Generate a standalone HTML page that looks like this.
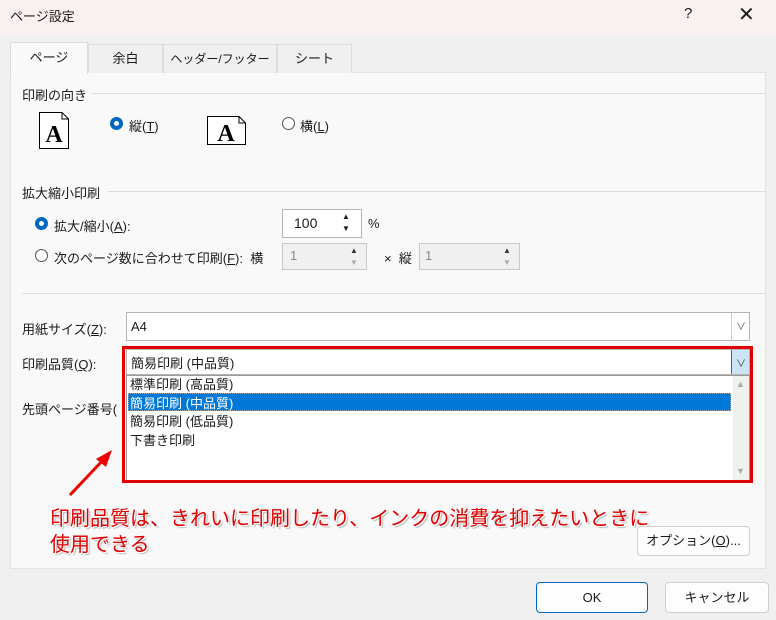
<!DOCTYPE html>
<html><head><meta charset="utf-8"><style>
*{margin:0;padding:0;box-sizing:border-box}
body{width:776px;height:620px;background:#f0f0f0;font-family:"Liberation Sans","Noto Sans CJK JP",sans-serif;font-size:13px;color:#1a1a1a;position:relative;overflow:hidden}
.a{position:absolute;white-space:nowrap}
.tab{position:absolute;top:44px;height:29px;background:#f0f0f0;border:1px solid #dcdcdc;border-bottom:none;text-align:center;line-height:28px;font-size:13px}
.line{position:absolute;height:1px;background:#dcdcdc}
.rad{position:absolute;width:13px;height:13px;border-radius:50%;border:1px solid #555;background:#fff}
.rad.on{border:4px solid #0067c0}
.box{position:absolute;background:#fff;border:1px solid #b5b5b5}
.btn{position:absolute;background:#fdfdfd;border:1px solid #cfcfcf;border-radius:4px;text-align:center;font-size:13px}
</style></head><body>
<div class="a" style="left:0;top:0;width:776px;height:34px;background:#f8f1f0"></div>
<div class="a" style="left:10px;top:6px;font-size:13px">ページ設定</div>
<div class="a" style="left:684px;top:5px;font-size:15px">?</div>
<div class="a" style="left:738px;top:2px;font-size:20px;font-weight:300">✕</div>

<div class="a" style="left:10px;top:72px;width:756px;height:497px;background:#f9f9f9;border:1px solid #e3e3e3"></div>
<div class="tab" style="left:88px;width:75px">余白</div>
<div class="tab" style="left:163px;width:114px;font-size:12px">ヘッダー/フッター</div>
<div class="tab" style="left:277px;width:75px">シート</div>
<div class="tab" style="left:10px;top:42px;height:32px;width:78px;background:#f9f9f9;line-height:30px">ページ</div>

<div class="line" style="left:92px;top:93px;width:674px"></div>
<div class="a" style="left:22px;top:85px">印刷の向き</div>
<svg class="a" style="left:39px;top:112px" width="32" height="38"><path d="M0.5 0.5H23L29.5 7V36.5H0.5Z" fill="#fff" stroke="#000"/><path d="M23 0.5V7H29.5" fill="none" stroke="#000"/><text x="15" y="30" font-family="Liberation Serif" font-size="24" text-anchor="middle" font-weight="bold">A</text></svg>
<div class="rad on" style="left:110px;top:117px"></div>
<div class="a" style="left:129px;top:116px">縦(<u>T</u>)</div>
<svg class="a" style="left:207px;top:116px" width="40" height="30"><path d="M0.5 0.5H32L38.5 7V28.5H0.5Z" fill="#fff" stroke="#000"/><path d="M32 0.5V7H38.5" fill="none" stroke="#000"/><text x="19" y="25" font-family="Liberation Serif" font-size="24" text-anchor="middle" font-weight="bold">A</text></svg>
<div class="rad" style="left:282px;top:117px"></div>
<div class="a" style="left:300px;top:116px">横(<u>L</u>)</div>

<div class="line" style="left:108px;top:191px;width:658px"></div>
<div class="a" style="left:22px;top:183px">拡大縮小印刷</div>
<div class="rad on" style="left:35px;top:217px"></div>
<div class="a" style="left:54px;top:216px">拡大/縮小(<u>A</u>):</div>
<div class="box" style="left:282px;top:209px;width:80px;height:29px"></div>
<div class="a" style="left:294px;top:215px;font-size:14px">100</div>
<div class="a" style="left:342px;top:211px;font-size:8px;line-height:12px">▲<br>▼</div>
<div class="a" style="left:368px;top:216px">%</div>
<div class="rad" style="left:35px;top:249px"></div>
<div class="a" style="left:54px;top:248px">次のページ数に合わせて印刷(<u>F</u>):&nbsp; 横</div>
<div class="box" style="left:282px;top:243px;width:85px;height:27px;background:#f0f0f0;border-color:#c8c8c8"></div>
<div class="a" style="left:290px;top:248px;color:#888">1</div>
<div class="a" style="left:350px;top:245px;font-size:8px;line-height:12px;color:#333">▲<br><span style="color:#aaa">▼</span></div>
<div class="a" style="left:384px;top:248px">×&nbsp; 縦</div>
<div class="box" style="left:419px;top:243px;width:101px;height:27px;background:#f0f0f0;border-color:#c8c8c8"></div>
<div class="a" style="left:425px;top:248px;color:#888">1</div>
<div class="a" style="left:503px;top:245px;font-size:8px;line-height:12px;color:#333">▲<br><span style="color:#aaa">▼</span></div>

<div class="line" style="left:22px;top:293px;width:744px"></div>
<div class="a" style="left:22px;top:319px">用紙サイズ(<u>Z</u>):</div>
<div class="box" style="left:126px;top:312px;width:624px;height:29px"></div>
<div class="a" style="left:131px;top:319px">A4</div>
<div class="a" style="left:731px;top:313px;width:1px;height:27px;background:#ccc"></div>
<div class="a" style="left:736px;top:318px;font-size:10px;color:#555">∨</div>

<div class="a" style="left:22px;top:354px">印刷品質(<u>Q</u>):</div>
<div class="a" style="left:22px;top:399px">先頭ページ番号(</div>
<div class="box" style="left:126px;top:349px;width:624px;height:26px"></div>
<div class="a" style="left:131px;top:353px">簡易印刷 (中品質)</div>
<div class="a" style="left:731px;top:350px;width:18px;height:24px;background:#cce4f7;border-left:1px solid #0078d7"></div>
<div class="a" style="left:736px;top:355px;font-size:10px;color:#333">∨</div>
<div class="box" style="left:126px;top:375px;width:624px;height:106px;border-color:#999"></div>
<div class="a" style="left:733px;top:376px;width:16px;height:104px;background:#f0f0f0"></div>
<div class="a" style="left:736px;top:379px;font-size:9px;color:#aaa">▲</div>
<div class="a" style="left:736px;top:466px;font-size:9px;color:#aaa">▼</div>
<div class="a" style="left:128px;top:393px;width:603px;height:18px;background:#0078d7;border:1px dotted #aaa"></div>
<div class="a" style="left:130px;top:376px;line-height:18.5px">標準印刷 (高品質)<br><span style="color:#fff">簡易印刷 (中品質)</span><br>簡易印刷 (低品質)<br>下書き印刷</div>
<div class="a" style="left:122px;top:346px;width:631px;height:137px;border:3px solid #e00000"></div>

<svg class="a" style="left:60px;top:445px" width="60" height="60"><line x1="10" y1="50" x2="44" y2="14" stroke="#e00" stroke-width="3"/><path d="M52 5L36 14L46 22Z" fill="#e00"/></svg>
<div class="a" style="left:50px;top:506px;font-size:20px;line-height:26px;color:#e00000;text-shadow:1px 1px 0 #fff,2px 2px 1px #bbb">印刷品質は、きれいに印刷したり、インクの消費を抑えたいときに<br>使用できる</div>

<div class="btn" style="left:637px;top:526px;width:113px;height:30px;line-height:28px">オプション(<u>O</u>)...</div>
<div class="btn" style="left:536px;top:582px;width:112px;height:31px;line-height:29px;border:1px solid #0067c0">OK</div>
<div class="btn" style="left:665px;top:582px;width:104px;height:31px;line-height:29px">キャンセル</div>
</body></html>
